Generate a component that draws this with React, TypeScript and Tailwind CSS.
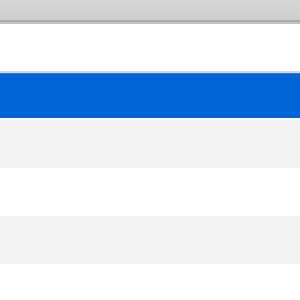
export default function App() {
  return (
    <div className="w-[300px] h-[300px] overflow-hidden bg-white flex flex-col">
      {/* header bar */}
      <div className="h-[20px] shrink-0 bg-gradient-to-b from-[#d6d6d6] to-[#cdcdcd]" />
      <div className="h-[2px] shrink-0 bg-[#ababab]" />
      <div className="h-[2px] shrink-0 bg-[#c2c2c2]" />
      {/* rows */}
      <div className="h-[47px] shrink-0 bg-white" />
      <div className="h-[2px] shrink-0 bg-[#d8d8d8]" />
      <div className="h-[45px] shrink-0 bg-[#0066d6] border-t border-[#2a7be0]" />
      <div className="h-[2px] shrink-0 bg-white" />
      <div className="h-[48px] shrink-0 bg-[#f3f3f3]" />
      <div className="h-[48px] shrink-0 bg-white" />
      <div className="h-[48px] shrink-0 bg-[#f3f3f3]" />
      <div className="h-[48px] shrink-0 bg-white" />
    </div>
  )
}
